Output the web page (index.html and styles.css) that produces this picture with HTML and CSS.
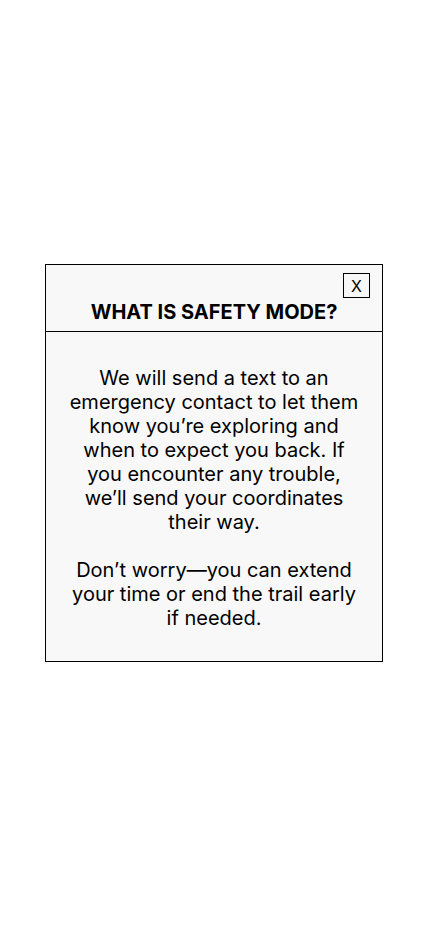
FILE: index.html
```html
<!DOCTYPE html>
<html>
<head>
<meta charset="utf-8">
<link rel="stylesheet" href="styles.css">
</head>
<body>
<div class="modal">
  <div class="modal-header">
    <div class="close-row"><button class="close-btn">X</button></div>
    <h2 class="title">WHAT IS SAFETY MODE?</h2>
  </div>
  <div class="modal-body">
    <p>We will send a text to an emergency contact to let them know you’re exploring and when to expect you back. If you encounter any trouble, we’ll send your coordinates their way.</p>
    <p>Don’t worry—you can extend your time or end the trail early if needed.</p>
  </div>
</div>
</body>
</html>
```

FILE: styles.css
```css
html, body {
  margin: 0;
  padding: 0;
  background: #ffffff;
}
body {
  font-family: Inter, "Noto Sans", sans-serif;
  color: #000;
  padding-top: 264px;
}
.modal {
  margin-left: 45px;
  width: 338px;
  box-sizing: border-box;
  border: 1px solid #000;
  background: #f8f8f8;
}
.modal-header {
  border-bottom: 1px solid #000;
  padding: 8px 12px 7px;
}
.close-row {
  display: flex;
  justify-content: flex-end;
}
.close-btn {
  width: 27px;
  height: 25px;
  box-sizing: border-box;
  border: 1px solid #000;
  background: transparent;
  font-family: Inter, sans-serif;
  font-size: 16px;
  color: #000;
  padding: 0;
  line-height: 22px;
}
.title {
  margin: 0;
  text-align: center;
  font-size: 20px;
  font-weight: 700;
  line-height: 24px;
  margin-top: 2px;
}
.modal-body {
  padding: 34px 20px 31px;
  text-align: center;
  font-size: 20px;
  line-height: 24px;
}
.modal-body p {
  margin: 0;
}
.modal-body p + p {
  margin-top: 24px;
}
```
